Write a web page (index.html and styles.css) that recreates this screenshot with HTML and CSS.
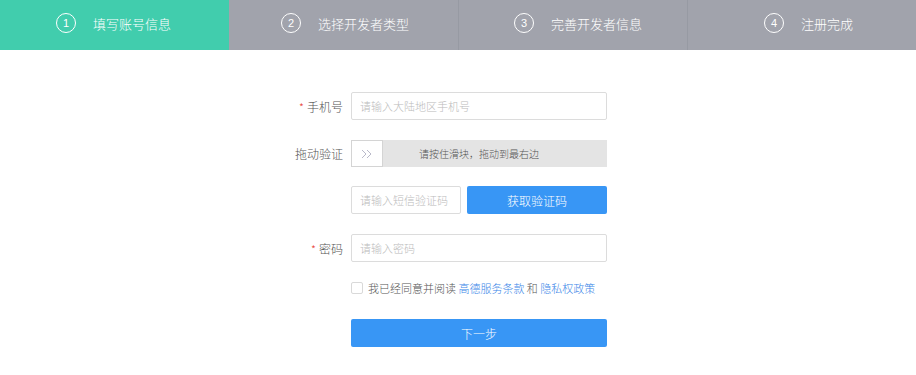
FILE: index.html
```html
<!DOCTYPE html>
<html>
<head>
  <title>注册 - 填写账号信息</title>
  <meta charset="utf-8">
  <link rel="stylesheet" href="styles.css">
</head>
<body>
  <div class="steps">
    <div class="step active"><span class="step-num">1</span><span class="step-name">填写账号信息</span></div>
    <div class="step"><span class="step-num">2</span><span class="step-name">选择开发者类型</span></div>
    <div class="step"><span class="step-num">3</span><span class="step-name">完善开发者信息</span></div>
    <div class="step"><span class="step-num">4</span><span class="step-name">注册完成</span></div>
  </div>

  <form class="form">
    <div class="form-row">
      <label class="form-label"><i class="required">*</i>手机号</label>
      <input class="form-input" type="text" placeholder="请输入大陆地区手机号">
    </div>

    <div class="form-row slider-row">
      <label class="form-label">拖动验证</label>
      <div class="slider">
        <span class="slider-handle">
          <svg width="12" height="10" viewBox="0 0 12 10"><path d="M1 1l4 4-4 4M6 1l4 4-4 4" fill="none" stroke="#b9b9c9" stroke-width="1"/></svg>
        </span>
        <span class="slider-text">请按住滑块，拖动到最右边</span>
      </div>
    </div>

    <div class="form-row">
      <label class="form-label"></label>
      <input class="form-input sms-input" type="text" placeholder="请输入短信验证码">
      <button type="button" class="btn sms-btn">获取验证码</button>
    </div>

    <div class="form-row">
      <label class="form-label"><i class="required">*</i>密码</label>
      <input class="form-input" type="password" placeholder="请输入密码">
    </div>

    <div class="form-row agree-row">
      <label class="form-label"></label>
      <span class="checkbox"></span>
      <span class="agree-text">我已经同意并阅读 <a href="#">高德服务条款</a> 和 <a href="#">隐私权政策</a></span>
    </div>

    <div class="form-row">
      <label class="form-label"></label>
      <button type="button" class="btn next-btn">下一步</button>
    </div>
  </form>
</body>
</html>
```

FILE: styles.css
```css
* {
  box-sizing: border-box;
}

body {
  margin: 0;
  background-color: white;
  font-family: "Noto Sans CJK SC", "Liberation Sans", sans-serif;
  font-weight: 300;
  color: #333;
}

.steps {
  display: flex;
  height: 50px;
}

.step {
  width: 25%;
  display: flex;
  align-items: center;
  padding-left: 56px;
  background-color: #a1a3ac;
  color: #fff;
  font-size: 13px;
  border-left: 1px solid #979aa3;
}

.step:nth-child(2) {
  padding-left: 52px;
  border-left: none;
}

.step:nth-child(3) {
  padding-left: 55px;
}

.step:nth-child(4) {
  padding-left: 76px;
}

.step.active {
  background-color: #41cdad;
  border-left: none;
}

.step-num {
  width: 20px;
  height: 20px;
  border: 1px solid #fff;
  border-radius: 50%;
  display: flex;
  align-items: center;
  justify-content: center;
  font-size: 11px;
  font-family: "Liberation Sans", sans-serif;
  margin-right: 17px;
  margin-top: -4px;
}

.step-name {
  margin-top: -4px;
}

.form {
  width: 330px;
  margin: 42px 0 0 277px;
}

.form-row {
  display: flex;
  align-items: center;
  margin-bottom: 20px;
}

.form-label {
  width: 74px;
  padding-right: 8px;
  text-align: right;
  font-size: 12px;
  color: #555;
  flex-shrink: 0;
}

.required {
  font-style: normal;
  color: #e8453c;
  margin-right: 3px;
  font-size: 11px;
}

.form-input {
  width: 256px;
  height: 28px;
  border: 1px solid #dcdcdc;
  border-radius: 2px;
  padding: 0 8px;
  font-size: 11px;
  font-family: inherit;
  font-weight: 300;
  outline: none;
}

.form-input::placeholder {
  color: #bbb;
}

.slider-row {
  margin-bottom: 19px;
}

.slider {
  width: 256px;
  height: 27px;
  display: flex;
  align-items: center;
  background-color: #e4e4e4;
}

.slider-handle {
  width: 32px;
  height: 27px;
  border: 1px solid #d4d4d4;
  background-color: #fff;
  display: flex;
  align-items: center;
  justify-content: center;
}

.slider-text {
  flex: 1;
  padding-right: 32px;
  text-align: center;
  font-size: 10px;
  color: #555;
}

.sms-input {
  width: 110px;
  margin-right: 6px;
}

.btn {
  cursor: pointer;
  border: none;
  border-radius: 2px;
  background-color: #3896f5;
  color: #fff;
  font-family: inherit;
  font-weight: 300;
  font-size: 12px;
  height: 28px;
}

.sms-btn {
  width: 140px;
}

.agree-row {
  height: 12px;
  margin-top: 1px;
  margin-bottom: 25px;
}

.checkbox {
  width: 12px;
  height: 12px;
  border: 1px solid #d9d9d9;
  border-radius: 2px;
  margin-right: 5px;
  flex-shrink: 0;
}

.agree-text {
  font-size: 11px;
  color: #555;
  white-space: nowrap;
}

.agree-text a {
  color: #3a86e8;
  text-decoration: none;
}

.next-btn {
  width: 256px;
}
```
